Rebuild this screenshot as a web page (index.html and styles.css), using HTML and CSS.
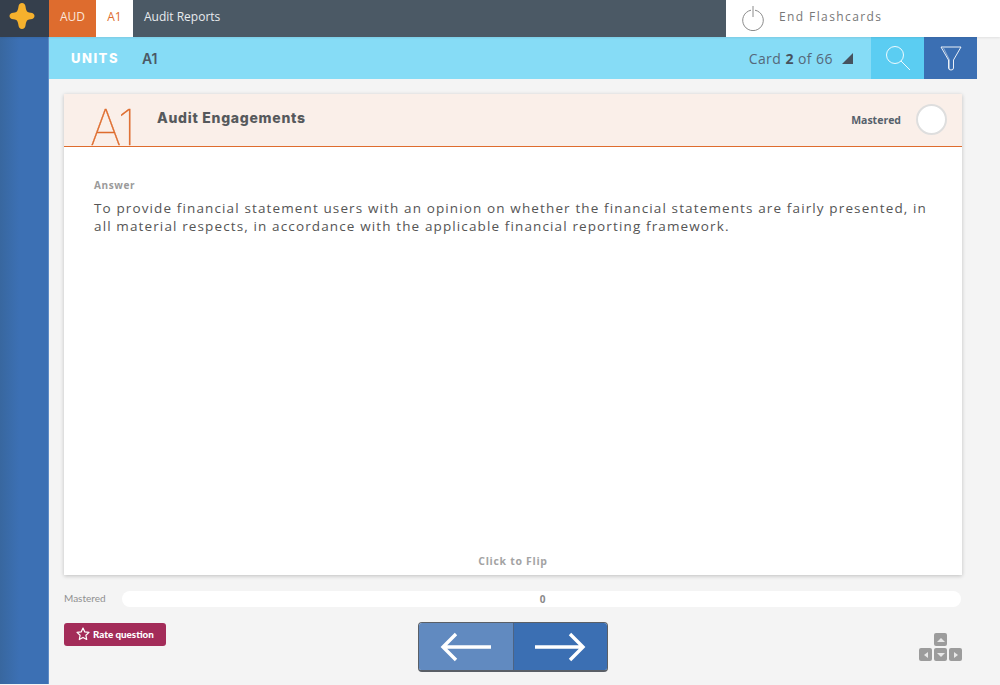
FILE: index.html
```html
<!DOCTYPE html>
<html lang="en">
<head>
<meta charset="utf-8">
<title>Audit Reports Flashcards</title>
<link rel="stylesheet" href="styles.css">
</head>
<body>
<header class="topbar">
  <div class="logo">
    <svg width="28" height="28" viewBox="0 0 28 28"><path d="M14 1c2 0 3.200 1.300 3.500 3.500.4 2.700 1 4.800 2.200 5.500.9.500 1.900.6 3 .7 2.200.2 3.800 1.300 3.800 3.300s-1.600 3.100-3.800 3.300c-1.100.1-2.100.2-3 .7-1.200.7-1.800 2.800-2.200 5.500C17.200 25.700 16 27 14 27s-3.200-1.300-3.500-3.500c-.4-2.700-1-4.800-2.200-5.500-.9-.5-1.900-.6-3-.7C3.100 17.100 1.500 16 1.500 14s1.600-3.100 3.800-3.300c1.100-.1 2.100-.2 3-.7 1.200-.7 1.800-2.800 2.200-5.500C10.800 2.300 12 1 14 1z" fill="#f6b12d"/></svg>
  </div>
  <div class="crumb crumb-aud">AUD</div>
  <div class="crumb crumb-a1">A1</div>
  <div class="crumb crumb-title">Audit Reports</div>
  <div class="end">
    <svg width="24" height="26" viewBox="0 0 24 26" fill="none" stroke="#8a8a8a" stroke-width="1"><path d="M10 5.200a10.300 10.300 0 1 0 4 0"/><path d="M12 1v11"/></svg>
    <span>End Flashcards</span>
  </div>
</header>
<div class="shell">
  <aside class="sidebar"></aside>
  <main class="main">
    <div class="subbar">
      <div class="units">UNITS</div>
      <div class="unit-name">A1</div>
      <div class="counter"><span>Card <b>2</b> of 66</span><i class="corner"></i></div>
      <div class="tool tool-search">
        <svg width="28" height="28" viewBox="0 0 28 28" fill="none" stroke="#fff" stroke-width=".9"><circle cx="11" cy="11" r="8.500"/><path d="M17 17l9 9"/></svg>
      </div>
      <div class="tool tool-filter">
        <svg width="24" height="28" viewBox="0 0 24 28" fill="none" stroke="#fff" stroke-width=".9"><path d="M2 3h20l-7.500 13v8q0 2-2.500 2t-2.500-2v-8z"/><path d="M4.500 4l6 12v9" stroke-opacity=".5"/></svg>
      </div>
    </div>
    <div class="content">
      <section class="card">
        <div class="card-head">
          <div class="unit-mark">A1</div>
          <h1 class="card-title">Audit Engagements</h1>
          <div class="mastered-label">Mastered</div>
          <div class="toggle"></div>
        </div>
        <div class="card-body">
          <div class="answer-label">Answer</div>
          <p class="answer">To provide financial statement users with an opinion on whether the financial statements are fairly presented, in all material respects, in accordance with the applicable financial reporting framework.</p>
          <div class="flip">Click to Flip</div>
        </div>
      </section>
      <div class="progress">
        <div class="progress-label">Mastered</div>
        <div class="track">0</div>
      </div>
      <div class="actions">
        <div class="rate">
          <svg width="14" height="14" viewBox="0 0 14 14" fill="none" stroke="#fff" stroke-width="1.200" stroke-linejoin="round"><path d="M7 1l1.800 3.900 4.200.5-3.100 2.900.8 4.200L7 10.400l-3.700 2.100.8-4.200L1 5.400l4.200-.5z"/></svg>
          <span>Rate question</span>
        </div>
        <div class="pager">
          <div class="page-btn page-prev">
            <svg width="52" height="30" viewBox="0 0 52 30" fill="none" stroke="#fff" stroke-width="3.400"><path d="M51 15H3M16 2L3 15l13 13"/></svg>
          </div>
          <div class="page-btn page-next">
            <svg width="52" height="30" viewBox="0 0 52 30" fill="none" stroke="#fff" stroke-width="3.400"><path d="M1 15h48M36 2l13 13-13 13"/></svg>
          </div>
        </div>
        <div class="keys">
          <div class="key key-up"><i class="tri tri-up"></i></div>
          <div class="key key-left"><i class="tri tri-left"></i></div>
          <div class="key key-down"><i class="tri tri-down"></i></div>
          <div class="key key-right"><i class="tri tri-right"></i></div>
        </div>
      </div>
    </div>
  </main>
</div>
</body>
</html>
```
FILE: styles.css
```css
* { box-sizing: border-box; }
html, body { height: 100%; }
body {
  margin: 0;
  height: 685px;
  overflow: hidden;
  background: #f4f4f4;
  font-family: "Open Sans", "Liberation Sans", sans-serif;
  display: flex;
  flex-direction: column;
}
.topbar { display: flex; height: 37px; flex: none; background: #fff; box-shadow: 0 1px 2px rgba(0,0,0,.08); position: relative; }
.logo { width: 49px; padding: 2px 0 0 8px; background: #353f4c; }
.crumb { display: flex; align-items: center; padding-bottom: 4px; font-size: 12px; }
.crumb-aud { width: 47px; justify-content: center; background: #de6c2e; color: #fbe6da; }
.crumb-a1 { width: 37px; justify-content: center; background: #fff; color: #de6c2e; }
.crumb-title { width: 593px; padding-left: 11px; background: #4b5965; color: #e8ebee; }
.end { flex: 1; display: flex; align-items: center; padding: 0 0 1px 15px; gap: 14px; font-size: 12px; letter-spacing: 1.400px; color: #777; }
.end span { margin-bottom: 3px; }
.shell { flex: 1; display: flex; min-height: 0; }
.sidebar { width: 49px; height: 647px; background: linear-gradient(90deg, #38679f, #3c70b4 40%); border-right: 1px solid #5f8cc6; }
.main { flex: 1; display: flex; flex-direction: column; }
.subbar { width: 928px; height: 42px; flex: none; background: #86dcf6; display: flex; align-items: center; padding-left: 22px; }
.units { font-family: Inter, sans-serif; font-weight: 800; font-size: 13px; letter-spacing: 1.500px; color: #fff; }
.unit-name { margin-left: 23px; font-family: Inter, sans-serif; font-weight: 600; font-size: 14px; color: #4b5965; }
.counter { margin-left: auto; display: flex; align-items: center; font-size: 14px; letter-spacing: .45px; color: #55687a; padding-right: 18px; }
.counter b { color: #46525e; }
.corner { width: 0; height: 0; margin-left: 9px; border-style: solid; border-width: 0 0 11px 11px; border-color: transparent transparent #46525e transparent; }
.tool { width: 53px; height: 42px; display: flex; align-items: center; justify-content: center; }
.tool-search { background: #5bcdf2; }
.tool-filter { background: #3b6fb3; }
.content { flex: 1; padding: 15px 38px 0 15px; display: flex; flex-direction: column; }
.card { height: 481px; flex: none; background: #fff; box-shadow: 0 1px 4px rgba(0,0,0,.22); display: flex; flex-direction: column; }
.card-head { height: 53px; flex: none; background: #faefe9; border-bottom: 1.500px solid #de6c2e; display: flex; align-items: flex-start; padding-right: 15px; }
.unit-mark { margin: 16px 0 0 26px; width: 67px; font-family: Inter, sans-serif; font-weight: 100; font-size: 49px; line-height: 36px; letter-spacing: -2px; color: #de6c2e; -webkit-text-stroke: .35px #de6c2e; }
.card-title { margin: 14px 0 0; font-family: Inter, sans-serif; font-weight: 800; font-size: 14px; line-height: 20px; letter-spacing: .72px; color: #56595c; }
.mastered-label { margin: 18px 15px 0 auto; font-weight: 700; font-size: 10.500px; line-height: 16px; color: #55606b; }
.toggle { width: 31px; height: 31px; margin-top: 10px; background: #fff; border: 2px solid #dedede; border-radius: 50%; }
.card-body { flex: 1; display: flex; flex-direction: column; padding: 30px 30px 6px; }
.answer-label { font-weight: 700; font-size: 10px; line-height: 16px; letter-spacing: .6px; color: #9a9a9a; }
.answer { margin: 6px 0 0; font-size: 13.500px; line-height: 18px; letter-spacing: 1.125px; color: #555; }
.flip { margin-top: auto; text-align: center; font-weight: 700; font-size: 10.500px; line-height: 16px; letter-spacing: .7px; color: #a3a3a3; }
.progress { display: flex; align-items: center; margin-top: 16px; height: 16px; }
.progress-label { width: 58px; padding-bottom: 2px; font-family: Lato, sans-serif; font-size: 10px; color: #909090; }
.track { flex: 1; height: 16px; margin-right: 1px; padding-left: 2px; background: #fff; border-radius: 8px; text-align: center; font-weight: 700; font-size: 10px; line-height: 17px; color: #8a8a8a; }
.actions { display: grid; grid-template-columns: 1fr auto 1fr; align-items: start; margin-top: 15px; }
.rate { justify-self: start; width: 102px; height: 23px; margin-top: 1px; background: #a32c59; border-radius: 3px; display: flex; align-items: center; gap: 3px; padding: 0 0 1px 12px; font-family: Lato, sans-serif; font-weight: 900; font-size: 9.800px; color: #fff; }
.pager { display: flex; width: 190px; height: 50px; border: 1px solid #5a5f66; border-bottom-width: 2px; border-radius: 4px; overflow: hidden; }
.page-btn { flex: 1; display: flex; align-items: center; justify-content: center; }
.page-prev { background: #618ac0; border-right: 1px solid #4d6484; }
.page-next { background: #3b6fb3; }
.keys { justify-self: end; display: grid; grid-template-columns: repeat(3, 13px); grid-template-rows: repeat(2, 13px); gap: 2px; margin-top: 11px; }
.key { background: #9c9c9c; border-radius: 2px; display: flex; align-items: center; justify-content: center; }
.key-up { grid-column: 2; grid-row: 1; }
.key-left { grid-column: 1; grid-row: 2; }
.key-down { grid-column: 2; grid-row: 2; }
.key-right { grid-column: 3; grid-row: 2; }
.tri { width: 0; height: 0; border-style: solid; border-color: transparent; }
.tri-up { border-width: 0 4px 4px; border-bottom-color: #e8e8e8; }
.tri-down { border-width: 4px 4px 0; border-top-color: #e8e8e8; }
.tri-left { border-width: 3.500px 4px 3.500px 0; border-right-color: #e8e8e8; }
.tri-right { border-width: 3.500px 0 3.500px 4px; border-left-color: #e8e8e8; }
```
